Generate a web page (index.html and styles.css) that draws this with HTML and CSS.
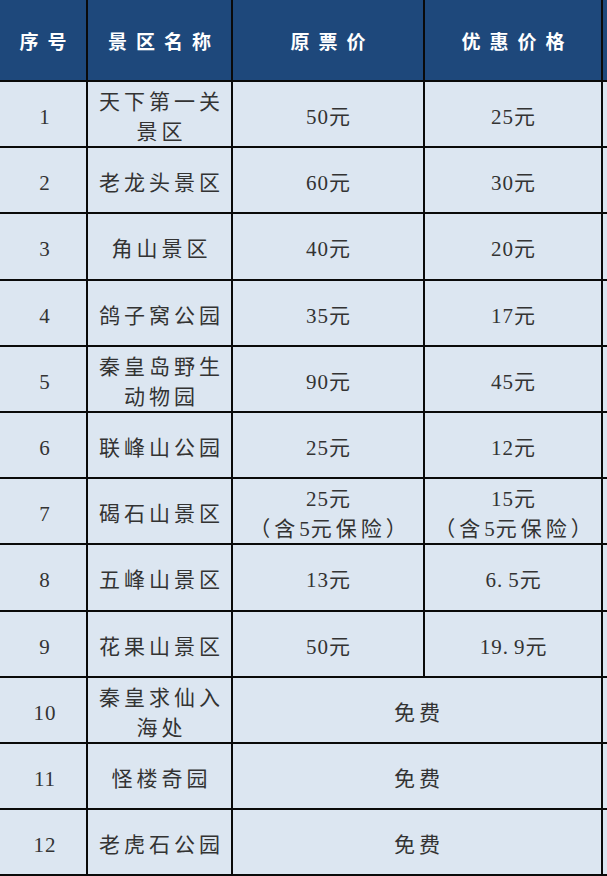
FILE: index.html
```html
<!DOCTYPE html>
<html lang="zh-CN">
<head>
<meta charset="utf-8">
<title>景区门票优惠</title>
<link rel="stylesheet" href="styles.css">
</head>
<body>
<div class="table">
  <div class="cell head">序号</div>
  <div class="cell head">景区名称</div>
  <div class="cell head">原票价</div>
  <div class="cell head">优惠价格</div>
  <div class="cell head edge"></div>

  <div class="cell"><span class="num">1</span></div>
  <div class="cell name">天下第一关景区</div>
  <div class="cell"><span class="num">50</span>元</div>
  <div class="cell"><span class="num">25</span>元</div>
  <div class="cell edge"></div>

  <div class="cell"><span class="num">2</span></div>
  <div class="cell name">老龙头景区</div>
  <div class="cell"><span class="num">60</span>元</div>
  <div class="cell"><span class="num">30</span>元</div>
  <div class="cell edge"></div>

  <div class="cell"><span class="num">3</span></div>
  <div class="cell name">角山景区</div>
  <div class="cell"><span class="num">40</span>元</div>
  <div class="cell"><span class="num">20</span>元</div>
  <div class="cell edge"></div>

  <div class="cell"><span class="num">4</span></div>
  <div class="cell name">鸽子窝公园</div>
  <div class="cell"><span class="num">35</span>元</div>
  <div class="cell"><span class="num">17</span>元</div>
  <div class="cell edge"></div>

  <div class="cell"><span class="num">5</span></div>
  <div class="cell name">秦皇岛野生动物园</div>
  <div class="cell"><span class="num">90</span>元</div>
  <div class="cell"><span class="num">45</span>元</div>
  <div class="cell edge"></div>

  <div class="cell"><span class="num">6</span></div>
  <div class="cell name">联峰山公园</div>
  <div class="cell"><span class="num">25</span>元</div>
  <div class="cell"><span class="num">12</span>元</div>
  <div class="cell edge"></div>

  <div class="cell"><span class="num">7</span></div>
  <div class="cell name">碣石山景区</div>
  <div class="cell"><span><span class="num">25</span>元<br>（含<span class="num">5</span>元保险）</span></div>
  <div class="cell"><span><span class="num">15</span>元<br>（含<span class="num">5</span>元保险）</span></div>
  <div class="cell edge"></div>

  <div class="cell"><span class="num">8</span></div>
  <div class="cell name">五峰山景区</div>
  <div class="cell"><span class="num">13</span>元</div>
  <div class="cell"><span class="num">6<span class="dot">.</span>5</span>元</div>
  <div class="cell edge"></div>

  <div class="cell"><span class="num">9</span></div>
  <div class="cell name">花果山景区</div>
  <div class="cell"><span class="num">50</span>元</div>
  <div class="cell"><span class="num">19<span class="dot">.</span>9</span>元</div>
  <div class="cell edge"></div>

  <div class="cell"><span class="num">10</span></div>
  <div class="cell name">秦皇求仙入海处</div>
  <div class="cell span2">免费</div>
  <div class="cell edge"></div>

  <div class="cell"><span class="num">11</span></div>
  <div class="cell name">怪楼奇园</div>
  <div class="cell span2">免费</div>
  <div class="cell edge"></div>

  <div class="cell"><span class="num">12</span></div>
  <div class="cell name">老虎石公园</div>
  <div class="cell span2">免费</div>
  <div class="cell edge"></div>
</div>
</body>
</html>
```
FILE: styles.css
```css
html, body {
  margin: 0;
  padding: 0;
  background: #dce6f1;
}

.table {
  display: grid;
  grid-template-columns: 88px 145px 192px 178px 4px;
  grid-template-rows: 82px repeat(12, 66.2px);
  width: 607px;
  font-family: "Liberation Serif", "Noto Sans CJK SC", serif;
  font-size: 21px;
  line-height: 30px;
  color: #333333;
  letter-spacing: 4px;
}

.cell {
  box-sizing: border-box;
  display: flex;
  align-items: center;
  justify-content: center;
  text-align: center;
  background: #dce6f1;
  border-right: 2px solid #0a0a0a;
  border-bottom: 2px solid #0a0a0a;
  padding: 6px 0 0 4px;
  overflow: hidden;
}

.head {
  background: #1e487b;
  color: #ffffff;
  font-weight: bold;
  font-size: 19px;
  letter-spacing: 9px;
  padding-left: 9px;
}

.edge {
  border-right: none;
  padding: 0;
}

.span2 {
  grid-column: span 2;
}

.num {
  letter-spacing: 1px;
}

.dot {
  letter-spacing: 6px;
}
```
